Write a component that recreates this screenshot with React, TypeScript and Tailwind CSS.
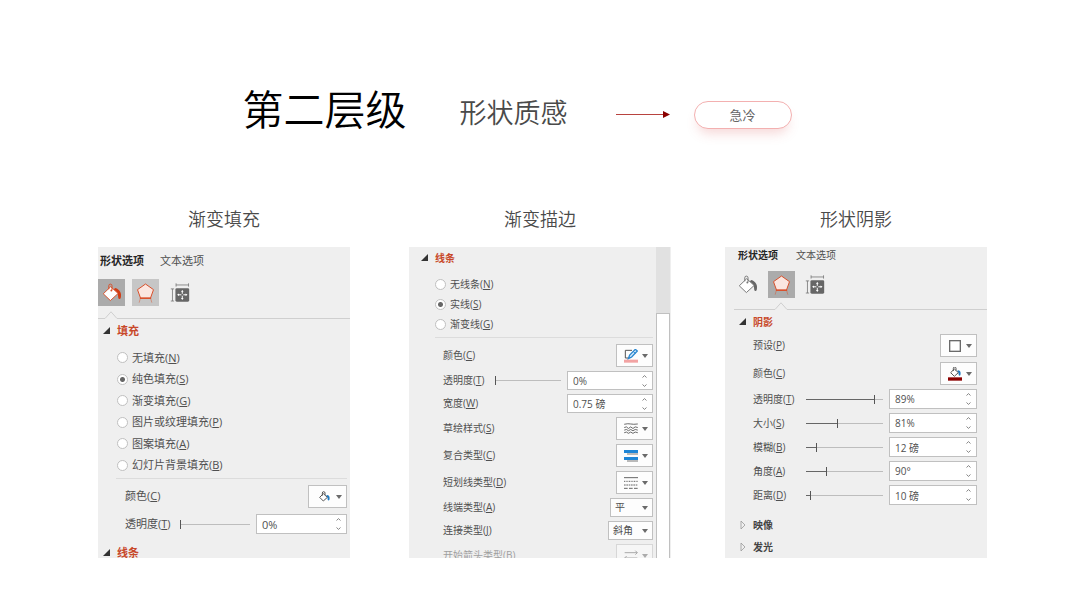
import React, { useId } from 'react';

const MONO = '#6a6a6a';
const ACCENT = '#d9512c';

/* ---------- Icons ---------- */

const BucketIcon = ({ active }: { active?: boolean }) => {
  const c = active ? ACCENT : '#777777';
  return (
    <svg viewBox="0 0 62 58" className="w-[20px] h-[19px]" fill="none">
      <path d="M41 15C55 19 62 31 58 46C56 52 50 50 50 42C50 34 47 27 36 20Z" fill={active ? '#d23c14' : '#666666'} />
      <path d="M27 11L50 32L26 54L4 33Z" fill="#ffffff" stroke={c} strokeWidth="3" />
      <path d="M21 19V8a5 5 0 0 1 10 0V22" stroke={c} strokeWidth="3" />
      <circle cx="29" cy="23" r="3" fill={c} />
    </svg>
  );
};

const PentagonIcon = () => (
  <svg viewBox="0 0 56 60" className="w-[19px] h-[20px]" fill="none">
    <path d="M28 3L52 20L43 45H13L4 20Z" fill="#fbe6e0" stroke={ACCENT} strokeWidth="3" />
    <path d="M11 46H45" stroke={ACCENT} strokeWidth="4" />
    <path d="M12 48L9 59M44 48L47 59" stroke={ACCENT} strokeWidth="3" opacity="0.45" />
  </svg>
);

const SizeIcon = () => (
  <svg viewBox="0 0 60 58" className="w-[20px] h-[19px]" fill="none">
    <path d="M18 6H56M18 1V11M56 1V11M7 18V55M2 18H12M2 55H12" stroke="#777777" strokeWidth="2.5" />
    <rect x="16" y="16" width="42" height="41" rx="4" fill="#666666" />
    <path d="M37 24V49M24 36H50" stroke="#ffffff" strokeWidth="3" />
    <path d="M37 21L33 27H41ZM37 52L33 46H41ZM21 36L27 32V40ZM53 36L47 32V40Z" fill="#ffffff" />
    <rect x="34" y="33" width="6" height="6" fill="#666666" />
  </svg>
);

const FillIcon = ({ bar }: { bar?: string }) => (
  <svg viewBox="0 0 42 42" className="w-[14px] h-[14px]" fill="none">
    <g transform={bar ? undefined : 'translate(0 5)'}>
      <path d="M30 10C38 11 39 18 37 25C35 28 31 26 32 22C32 18 30 14 27 13Z" fill="#1f7cc4" />
      <path d="M19 6L31 17L19 28L8 17Z" fill="#ffffff" stroke="#555555" strokeWidth="3" />
      <path d="M16 12V4a4 4 0 0 1 8 0V10" stroke="#555555" strokeWidth="3" />
    </g>
    {bar && <rect x="0" y="31" width="42" height="10" fill={bar} />}
  </svg>
);

const PenIcon = () => (
  <svg viewBox="0 0 42 42" className="w-[14px] h-[14px]" fill="none">
    <path d="M24 4H4V27H14" stroke="#555555" strokeWidth="3" />
    <path d="M34 1L40 6L23 24L13 29L17 18Z" fill="#d6eafa" stroke="#2a86cf" strokeWidth="4" />
    <path d="M28 8L34 13" stroke="#2a86cf" strokeWidth="3" />
    <rect x="0" y="32" width="42" height="9" fill="#f2a3a3" />
  </svg>
);

const SketchIcon = () => (
  <svg viewBox="0 0 42 34" className="w-[14px] h-[11px]" fill="none" stroke="#666666" strokeWidth="3">
    <path d="M0 4Q12 1 20 3T42 3" />
    <path d="M0 14L7 12L13 17L20 12L27 17L34 12L42 14" />
    <path d="M0 22L7 20L13 24L20 20L27 24L34 20L42 22" />
    <path d="M0 30L7 28L13 32L20 28L27 32L34 28L42 30" />
  </svg>
);

const CompoundIcon = () => (
  <svg viewBox="0 0 42 36" className="w-[14px] h-[12px]">
    <rect x="0" y="0" width="42" height="9" fill="#1f86d6" />
    <rect x="9" y="10" width="33" height="4" fill="#999999" />
    <rect x="0" y="21" width="42" height="9" fill="#1f86d6" />
    <rect x="9" y="31" width="33" height="4" fill="#999999" />
  </svg>
);

const DashIcon = () => (
  <svg viewBox="0 0 42 36" className="w-[14px] h-[12px]" stroke="#666666" strokeWidth="3">
    <path d="M0 2H42" />
    <path d="M0 13H42" strokeDasharray="3 2" />
    <path d="M0 24H42" strokeDasharray="5 2" />
    <path d="M0 34H42" strokeDasharray="11 4" />
  </svg>
);

const ArrowsIcon = () => (
  <svg viewBox="0 0 42 36" className="w-[14px] h-[12px]" stroke="#666666" strokeWidth="3" fill="none">
    <path d="M2 8H40M34 2L40 8L34 14" />
    <path d="M40 24H2M8 18L2 24L8 30" />
  </svg>
);

const SquareIcon = () => (
  <svg viewBox="0 0 42 42" className="w-[14px] h-[14px]">
    <rect x="5" y="5" width="32" height="32" fill="#ffffff" stroke={MONO} strokeWidth="4" />
  </svg>
);

const Caret = () => (
  <svg viewBox="0 0 6 4" className="w-[6px] h-[4px] shrink-0">
    <path d="M0 0H6L3 4Z" fill={MONO} />
  </svg>
);

/* ---------- Controls ---------- */

const Mnemonic = ({ text, k }: { text: string; k: string }) => (
  <>{text}(<u className="underline-offset-1">{k}</u>)</>
);

const SectionTitle = ({ children, open = true }: { children: React.ReactNode; open?: boolean }) => (
  <button className={`flex items-center gap-[7px] h-4 leading-4 font-bold ${open ? 'text-[#c8482a]' : 'text-[#444444]'}`}>
    <svg viewBox="0 0 6 6" className="w-[6px] h-[6px] overflow-visible">
      {open ? <path d="M6 -1V6H-1Z" fill="#333333" /> : <path d="M1 -1L5 3L1 7Z" fill="none" stroke="#999999" strokeWidth="0.8" />}
    </svg>
    {children}
  </button>
);

const Radio = ({ name, text, k, checked }: { name: string; text: string; k: string; checked?: boolean }) => (
  <label className="flex items-center gap-1">
    <input
      type="radio"
      name={name}
      defaultChecked={checked}
      className="appearance-none w-[11px] h-[11px] rounded-full border border-[#c0c0c0] bg-white checked:bg-[radial-gradient(circle,#666666_2px,#ffffff_3px)]"
    />
    <span><Mnemonic text={text} k={k} /></span>
  </label>
);

const Slider = ({ label, value }: { label: string; value: number }) => (
  <input
    type="range"
    aria-label={label}
    defaultValue={value}
    className="appearance-none flex-1 min-w-0 h-[9px] mr-[6px] bg-[length:100%_1px] bg-center bg-no-repeat [&::-webkit-slider-thumb]:appearance-none [&::-webkit-slider-thumb]:w-px [&::-webkit-slider-thumb]:h-[9px] [&::-webkit-slider-thumb]:bg-[#555555]"
    style={{ backgroundImage: `linear-gradient(to right, #666666 ${value}%, #bdbdbd ${value}%)` }}
  />
);

interface NumberRowProps {
  text: string;
  k: string;
  value: string;
  slider?: number;
  labelClass: string;
  boxClass: string;
}

const NumberRow: React.FC<NumberRowProps> = ({ text, k, value, slider, labelClass, boxClass }) => {
  const id = useId();
  return (
    <div className="flex items-center">
      <label htmlFor={id} className={`shrink-0 ${labelClass}`}><Mnemonic text={text} k={k} /></label>
      {slider !== undefined && <Slider label={text} value={slider} />}
      <div className={`flex items-center shrink-0 ml-auto border border-[#c0c0c0] bg-white ${boxClass}`}>
        <input id={id} type="text" defaultValue={value} className="flex-1 min-w-0 h-full pl-[5px] outline-none" />
        <div className="flex flex-col gap-[6px] pr-[5px]">
          <button aria-label="增加" className="block">
            <svg viewBox="0 0 5 3" className="block w-[5px] h-[3px]"><path d="M0.5 2.5L2.5 0.6L4.5 2.5" fill="none" stroke="#777777" strokeWidth="0.9" /></svg>
          </button>
          <button aria-label="减少" className="block">
            <svg viewBox="0 0 5 3" className="block w-[5px] h-[3px]"><path d="M0.5 0.5L2.5 2.4L4.5 0.5" fill="none" stroke="#777777" strokeWidth="0.9" /></svg>
          </button>
        </div>
      </div>
    </div>
  );
};

const MenuRow = ({ text, k, icon, wide, disabled }: { text: string; k: string; icon: React.ReactNode; wide?: boolean; disabled?: boolean }) => {
  const id = useId();
  return (
    <div className={`flex items-center justify-between h-[23px] shrink-0 ${disabled ? 'opacity-50' : ''}`}>
      <label htmlFor={id}><Mnemonic text={text} k={k} /></label>
      <button
        id={id}
        disabled={disabled}
        className={`flex items-center justify-between h-full pr-1 border border-[#c0c0c0] bg-[#fdfdfd] ${wide ? 'w-[39px] pl-2' : 'w-[37px] pl-[7px]'}`}
      >
        {icon}
        <Caret />
      </button>
    </div>
  );
};

const SelectRow = ({ text, k, value, width }: { text: string; k: string; value: string; width: string }) => {
  const id = useId();
  return (
    <div className="flex items-center justify-between h-[19px]">
      <label htmlFor={id}><Mnemonic text={text} k={k} /></label>
      <div className={`relative h-full ${width}`}>
        <select id={id} className="appearance-none w-full h-full pl-1 border border-[#c0c0c0] bg-[#fdfdfd] outline-none">
          <option>{value}</option>
        </select>
        <span className="absolute inset-y-0 right-[5px] flex items-center pointer-events-none"><Caret /></span>
      </div>
    </div>
  );
};

const Notch = ({ lead }: { lead: string }) => (
  <div className="flex items-end h-2">
    <div className={`h-px bg-[#cfcfcf] ${lead}`} />
    <svg viewBox="0 0 12 8" className="w-3 h-2" fill="none">
      <path d="M0 7.5L6 0.8L12 7.5" stroke="#cfcfcf" />
    </svg>
    <div className="h-px flex-1 bg-[#cfcfcf]" />
  </div>
);

const Column = ({ title, pad, children }: { title: string; pad: string; children: React.ReactNode }) => (
  <section className={`flex flex-col gap-[14px] ${pad}`}>
    <h3 className="text-center text-lg leading-7 font-[350] text-[#4a4a4a]">{title}</h3>
    <div className="flex-1 bg-[#efefef] overflow-hidden">{children}</div>
  </section>
);

/* ---------- Panels ---------- */

const fills = [
  { text: '无填充', k: 'N' },
  { text: '纯色填充', k: 'S', checked: true },
  { text: '渐变填充', k: 'G' },
  { text: '图片或纹理填充', k: 'P' },
  { text: '图案填充', k: 'A' },
  { text: '幻灯片背景填充', k: 'B' },
];

const lines = [
  { text: '无线条', k: 'N' },
  { text: '实线', k: 'S', checked: true },
  { text: '渐变线', k: 'G' },
];

const shadows = [
  { text: '透明度', k: 'T', value: '89%', slider: 89 },
  { text: '大小', k: 'S', value: '81%', slider: 41 },
  { text: '模糊', k: 'B', value: '12 磅', slider: 13 },
  { text: '角度', k: 'A', value: '90°', slider: 26 },
  { text: '距离', k: 'D', value: '10 磅', slider: 5 },
];

const FillPanel = () => (
  <div className="pt-[6px] text-[11px]">
    <div className="flex gap-4 pl-[2px] leading-4">
      <button className="font-bold text-[#262626]">形状选项</button>
      <button>文本选项</button>
    </div>
    <div className="flex items-center mt-[10px]">
      <button aria-label="填充与线条" className="flex items-center justify-center w-[27px] h-[27px] bg-[#ababab]"><BucketIcon active /></button>
      <button aria-label="效果" className="flex items-center justify-center w-[27px] h-[27px] ml-[7px] bg-[#c6c6c6]"><PentagonIcon /></button>
      <button aria-label="大小与属性" className="ml-[11px]"><SizeIcon /></button>
    </div>
    <div className="mt-[5px]"><Notch lead="w-[7px]" /></div>
    <div className="mt-1 pl-[6px]"><SectionTitle>填充</SectionTitle></div>
    <div className="grid grid-rows-6 h-[129px] mt-2 pl-[19px]">
      {fills.map((f) => <Radio key={f.k} name="fill" {...f} />)}
    </div>
    <div className="h-px mt-[2px] ml-[18px] mr-[3px] bg-[#dcdcdc]" />
    <div className="flex flex-col gap-[6px] mt-[6px] pl-[27px] pr-[3px]">
      <MenuRow text="颜色" k="C" icon={<FillIcon />} wide />
      <NumberRow text="透明度" k="T" value="0%" slider={0} labelClass="w-[55px]" boxClass="w-[91px] h-5" />
    </div>
    <div className="h-[13px] mt-[11px] pl-[6px] overflow-hidden"><SectionTitle>线条</SectionTitle></div>
  </div>
);

const LinePanel = () => (
  <div className="flex h-full text-[10px]">
    <div className="flex-1 min-w-0 pt-[3px] pl-[13px] pr-[3px]">
      <SectionTitle>线条</SectionTitle>
      <div className="mt-2 pl-[13px]">
        {lines.map((l) => (
          <div key={l.k} className="flex items-center h-5"><Radio name="line" {...l} /></div>
        ))}
      </div>
      <div className="h-px mt-[3px] ml-[13px] bg-[#dcdcdc]" />
      <div className="flex flex-col gap-1 mt-[6px] pl-[21px]">
        <MenuRow text="颜色" k="C" icon={<PenIcon />} />
        <NumberRow text="透明度" k="T" value="0%" slider={0} labelClass="w-[52px]" boxClass="w-[86px] h-[19px]" />
        <NumberRow text="宽度" k="W" value="0.75 磅" labelClass="" boxClass="w-[86px] h-[19px]" />
        <MenuRow text="草绘样式" k="S" icon={<SketchIcon />} />
        <MenuRow text="复合类型" k="C" icon={<CompoundIcon />} />
        <MenuRow text="短划线类型" k="D" icon={<DashIcon />} />
        <SelectRow text="线端类型" k="A" value="平" width="w-[43px]" />
        <SelectRow text="连接类型" k="J" value="斜角" width="w-[45px]" />
        <div className="h-[14px] overflow-hidden">
          <MenuRow text="开始箭头类型" k="B" icon={<ArrowsIcon />} disabled />
        </div>
      </div>
    </div>
    <div className="w-[14px] mr-px pt-[66px] bg-[#e1e1e1]">
      <div className="h-full border border-b-0 border-[#c0c0c0] bg-white" />
    </div>
  </div>
);

const ShadowPanel = () => (
  <div className="pb-[3px] text-[10px]">
    <div className="flex gap-[18px] pl-[13px] leading-4">
      <button className="font-bold text-[#262626]">形状选项</button>
      <button>文本选项</button>
    </div>
    <div className="flex items-center mt-2 pl-[13px]">
      <button aria-label="填充与线条"><BucketIcon /></button>
      <button aria-label="效果" className="flex items-center justify-center w-[27px] h-[27px] ml-[10px] bg-[#ababab]"><PentagonIcon /></button>
      <button aria-label="大小与属性" className="ml-[10px]"><SizeIcon /></button>
    </div>
    <div className="mt-1 ml-[9px]"><Notch lead="w-[41px]" /></div>
    <div className="mt-1 pl-[15px]"><SectionTitle>阴影</SectionTitle></div>
    <div className="flex flex-col gap-[5px] mt-1 pl-[28px] pr-[10px]">
      <MenuRow text="预设" k="P" icon={<SquareIcon />} />
      <MenuRow text="颜色" k="C" icon={<FillIcon bar="#8b0000" />} />
    </div>
    <div className="flex flex-col gap-1 mt-1 pl-[28px] pr-[10px]">
      {shadows.map((s) => (
        <NumberRow key={s.k} {...s} labelClass="w-[53px]" boxClass="w-[88px] h-5" />
      ))}
    </div>
    <div className="flex flex-col gap-[6px] mt-3 pl-[15px]">
      <SectionTitle open={false}>映像</SectionTitle>
      <SectionTitle open={false}>发光</SectionTitle>
    </div>
  </div>
);

export default function App() {
  return (
    <main className="min-h-screen bg-white pt-[89px] pb-12 text-[#505050] font-['Open_Sans','Noto_Sans_CJK_SC',sans-serif]">
      <header className="flex items-end justify-center pr-[46px]">
        <h1 className="text-[41px] leading-10 font-[350] text-black">第二层级</h1>
        <h2 className="ml-[53px] text-[27px] leading-8 font-[350] text-[#4a4a4a]">形状质感</h2>
        <svg viewBox="0 0 54 32" className="w-[54px] h-8 ml-12 mr-6">
          <path d="M0 17.5H48" stroke="#b8433f" strokeWidth="1" />
          <path d="M47 14L54 17.5L47 21Z" fill="#8b0000" />
        </svg>
        <button className="w-[98px] h-7 rounded-full border border-[#f3b0b0] bg-white text-[13px] leading-6 text-[#666666] shadow-[0_8px_12px_-4px_rgba(220,90,90,0.25)]">
          急冷
        </button>
      </header>

      <div className="grid grid-cols-3 mt-[76px] px-[66px]">
        <Column title="渐变填充" pad="px-8"><FillPanel /></Column>
        <Column title="渐变描边" pad="px-[27px]"><LinePanel /></Column>
        <Column title="形状阴影" pad="px-[27px]"><ShadowPanel /></Column>
      </div>
    </main>
  );
}
